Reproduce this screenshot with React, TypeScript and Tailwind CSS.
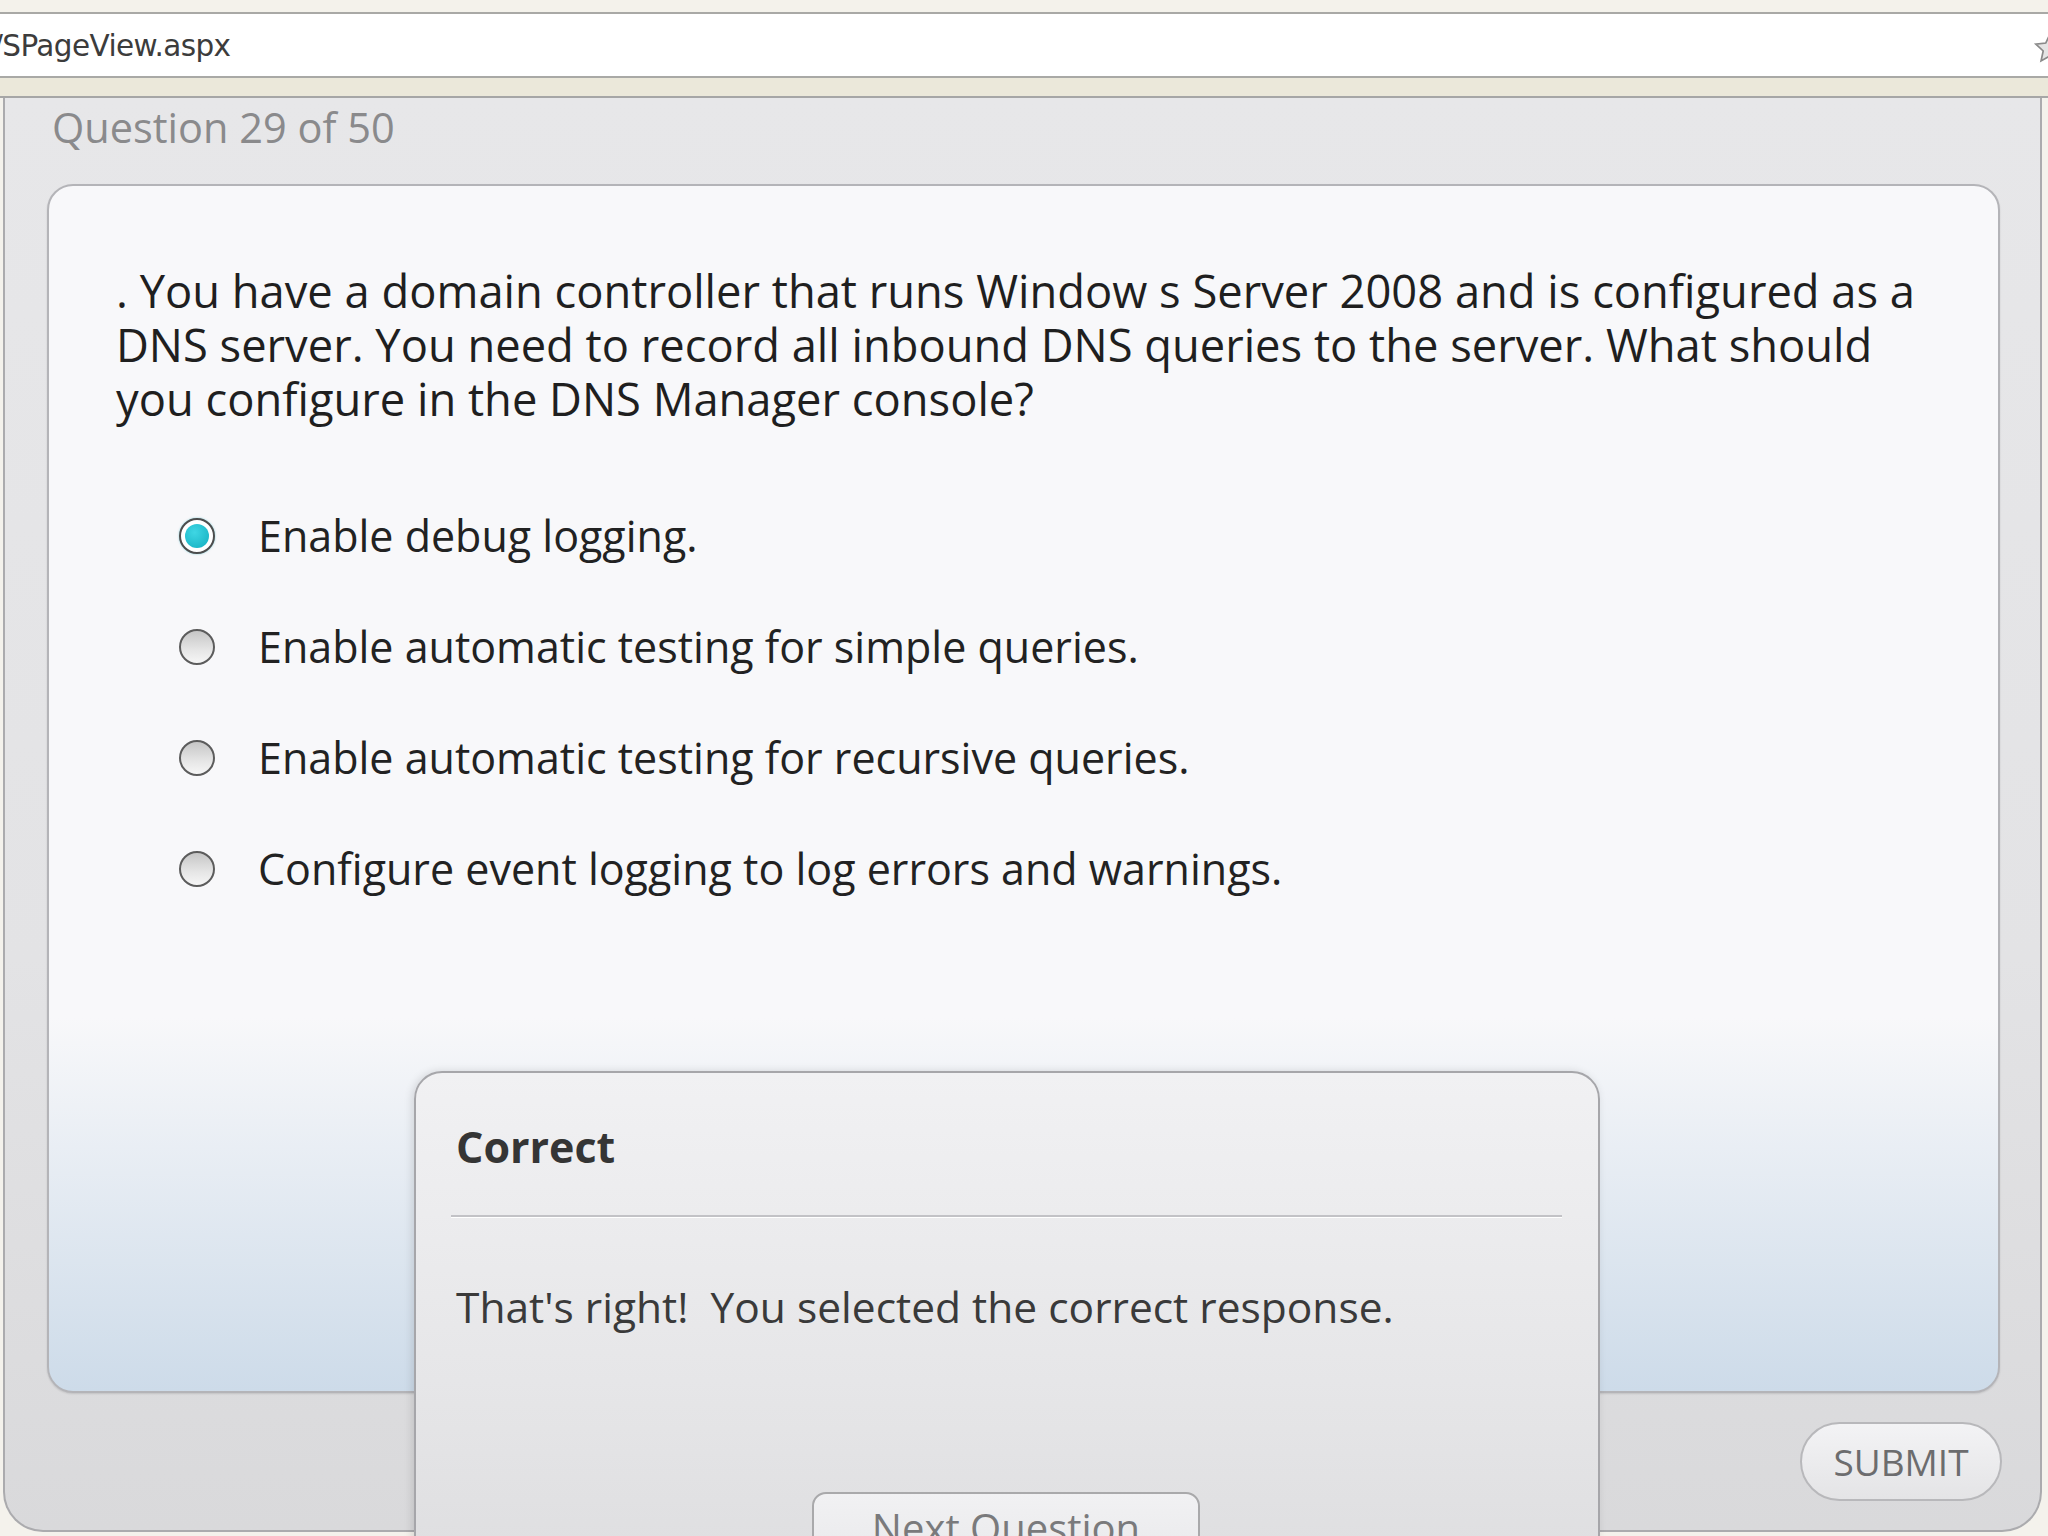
import React from "react";

function Radio({ selected }: { selected?: boolean }) {
  if (selected) {
    return (
      <div className="w-[36px] h-[36px] shrink-0 rounded-full border-2 border-[#4d4d4d] bg-white p-[4px] shadow-[0_0_2px_rgba(0,160,180,0.5)]">
        <div className="w-full h-full rounded-full bg-[radial-gradient(circle_at_40%_35%,#3fd6e4,#12aebf)]" />
      </div>
    );
  }
  return (
    <div className="w-[36px] h-[36px] shrink-0 rounded-full border-2 border-[#5c5c5c] bg-[linear-gradient(to_bottom,#c6c6c6,#e6e6e6_60%,#f6f6f6)]" />
  );
}

const options = [
  { text: "Enable debug logging.", selected: true },
  { text: "Enable automatic testing for simple queries." },
  { text: "Enable automatic testing for recursive queries." },
  { text: "Configure event logging to log errors and warnings." },
];

export default function App() {
  return (
    <div className="w-[2048px] h-[1536px] overflow-hidden bg-[#f4f2ec] flex flex-col font-['Open_Sans',sans-serif]">
      {/* browser top strip */}
      <div className="h-[12px] shrink-0 bg-[#f4f2eb]" />
      {/* address bar */}
      <div className="h-[66px] shrink-0 bg-white border-y-2 border-[#a9a9a6] flex items-center overflow-hidden">
        <span className="ml-[-7px] mt-[4px] text-[29.5px] tracking-[-0.6px] text-[#3c3c3c] font-['DejaVu_Sans',sans-serif] leading-none">
          /SPageView.aspx
        </span>
        <svg className="ml-auto mr-[-20px] mt-[6px]" width="36" height="34" viewBox="0 0 24 24">
          <path
            d="M12 2l3 6.5 7 .8-5.2 4.8 1.5 7L12 17.5 5.7 21.1l1.5-7L2 9.3l7-.8z"
            fill="#e4e4e4"
            stroke="#8a8a8a"
            strokeWidth="1.2"
          />
        </svg>
      </div>
      {/* cream strip */}
      <div className="h-[20px] shrink-0 bg-[#ebe8da] border-b-2 border-[#a6a6a6]" />

      {/* main panel */}
      <div className="relative h-[1434px] shrink-0 ml-[3px] mr-[6px] border-x-2 border-b-2 border-[#ababae] rounded-b-[40px] bg-[linear-gradient(to_bottom,#e7e7e9,#e3e3e5_60%,#d9d9db)] flex flex-col">
        <div className="h-[86px] shrink-0 pt-[8px] pl-[47px]">
          <div className="text-[41.5px] leading-[42px] text-[#8a8a8c]">Question 29 of 50</div>
        </div>

        {/* question card */}
        <div className="ml-[42px] w-[1953px] h-[1209px] shrink-0 rounded-[26px] border-2 border-[#b4b4b8] bg-[linear-gradient(to_bottom,#f8f8fa_0%,#f8f8fa_69%,#cddbe9_100%)] shadow-[0_1px_2px_rgba(0,0,0,0.12)] pl-[67px] pt-[78px]">
          <div className="text-[45.3px] leading-[54px] text-[#1f1f1f] whitespace-nowrap">
            . You have a domain controller that runs Window s Server 2008 and is configured as a
            <br />
            DNS server. You need to record all inbound DNS queries to the server. What should
            <br />
            you configure in the DNS Manager console?
          </div>

          <div className="mt-[54px] flex flex-col">
            {options.map((o) => (
              <div key={o.text} className="h-[111px] flex items-center pl-[63px] gap-[43px]">
                <Radio selected={o.selected} />
                <span className="text-[43px] leading-[54px] text-[#222222] whitespace-nowrap">{o.text}</span>
              </div>
            ))}
          </div>
        </div>

        {/* submit row */}
        <div className="mt-[29px] flex justify-end pr-[38px]">
          <div className="w-[202px] h-[79px] rounded-full border-2 border-[#b8b8bb] bg-[linear-gradient(to_bottom,#f3f3f5,#e4e4e6)] flex items-center justify-center">
            <span className="text-[37px] text-[#6c6c6e] leading-none">SUBMIT</span>
          </div>
        </div>

        {/* feedback popup */}
        <div className="absolute left-[409px] top-[973px] w-[1186px] h-[620px] rounded-[28px] border-2 border-[#a6a6aa] bg-[linear-gradient(to_bottom,#f1f1f3,#e6e6e8_50%,#d9d9db)] shadow-[-2px_0_8px_rgba(0,0,0,0.12)] pt-[49px]">
          <div className="pl-[40px] text-[43px] leading-[50px] font-bold text-[#353535]">Correct</div>
          <div className="mt-[43px] ml-[35px] mr-[36px] h-[3px] border-t-2 border-[#c2c2c6] bg-white" />
          <div className="mt-[62px] pl-[40px] text-[42.5px] leading-[54px] text-[#3a3a3a] whitespace-pre">
            {"That's right!  You selected the correct response."}
          </div>
          <div className="mt-[158px] ml-[396px] w-[388px] h-[84px] rounded-[14px] border-2 border-[#a9a9ab] bg-[linear-gradient(to_bottom,#f1f1f3,#e8e8ea)] pt-[10px] text-center">
            <span className="text-[40px] leading-[48px] text-[#7a7a7c]">Next Question</span>
          </div>
        </div>
      </div>
    </div>
  );
}
